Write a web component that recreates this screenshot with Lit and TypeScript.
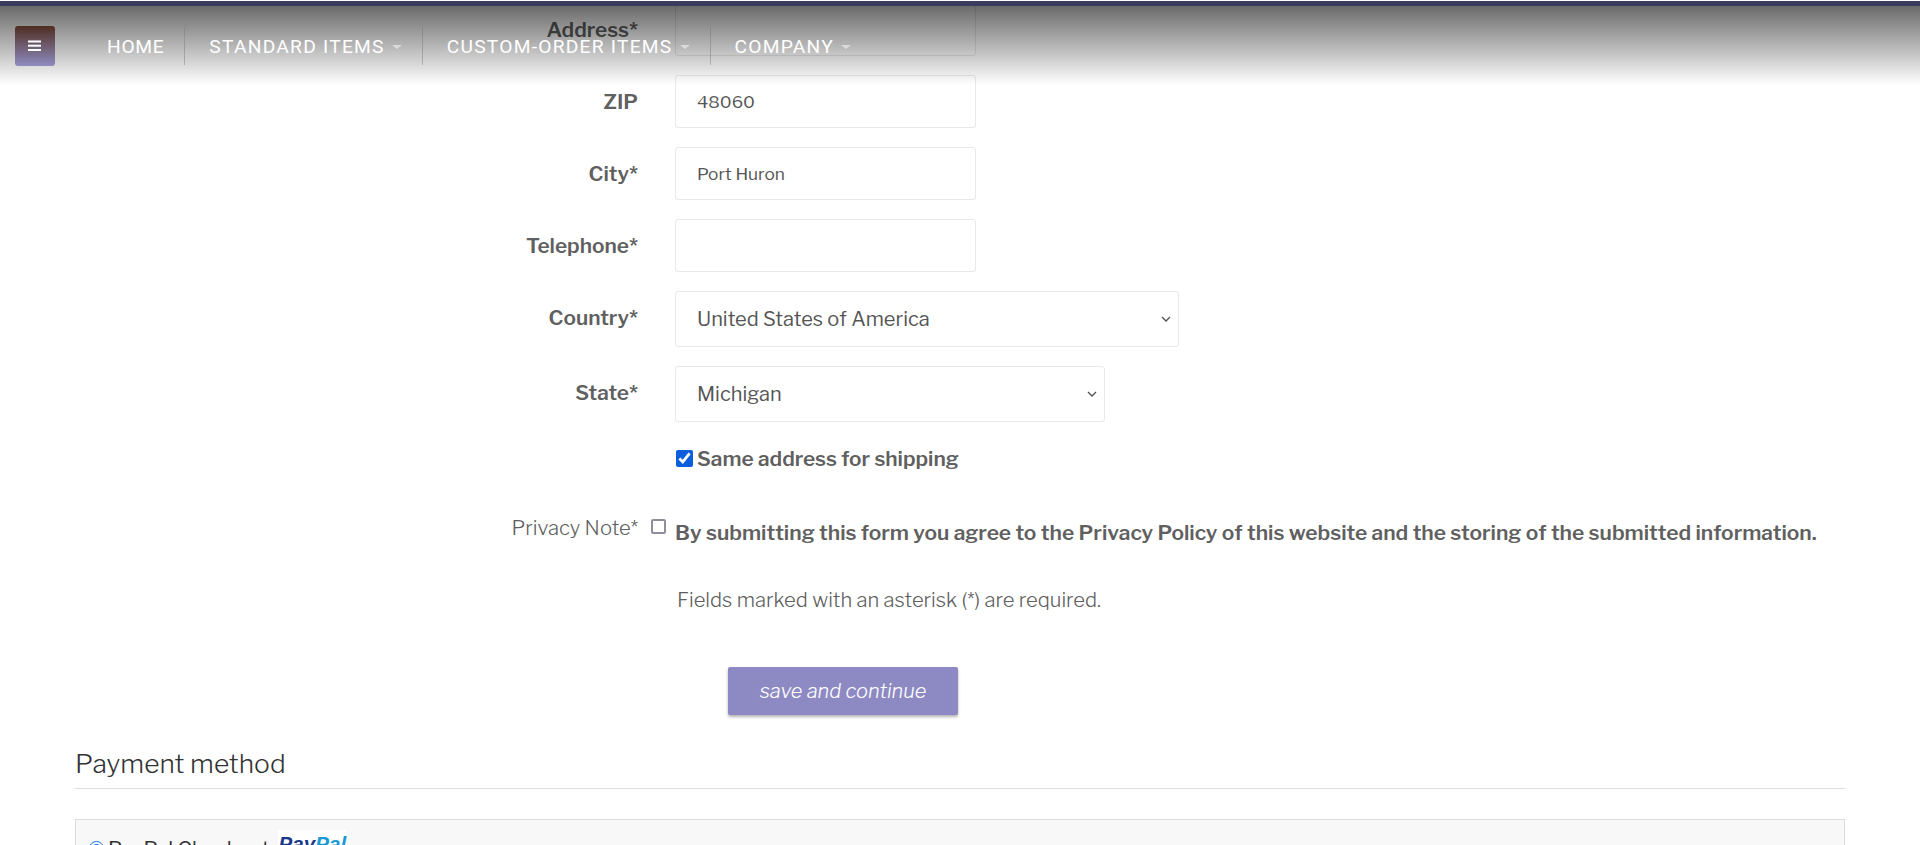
import { LitElement, html, css } from "lit";
import { customElement } from "lit/decorators.js";

@customElement("app-root")
export class AppRoot extends LitElement {
  static styles = css`
    :host { display: block; position: relative; height: 845px; overflow: hidden; background: #fff; font-family: "Libre Franklin", "Inter", "Liberation Sans", sans-serif; color: #606060; font-size: 20.8px; }
    * { box-sizing: border-box; }
    .nav { position: absolute; left: 0; right: 0; top: 0; height: 85px; z-index: 5; border-top: 1px solid #fff; background: linear-gradient(rgba(0,0,0,.62), rgba(0,0,0,0)); }
    .navtop { height: 5px; background: #3a3b5e; }
    .navrow { display: flex; align-items: center; height: 80px; padding: 0 0 0 15px; }
    .burger { width: 40px; height: 40px; border-radius: 3px; background: linear-gradient(#4f2d20, #8e8bc0); display: flex; align-items: center; justify-content: center; margin-right: 28px; }
    .burger svg { display: block; }
    .item { display: flex; align-items: center; height: 38px; padding: 2px 20px 0 24px; color: #fff; font: 400 19.2px/1 "Roboto", sans-serif; letter-spacing: 1.25px; border-right: 1px solid rgba(120,120,120,.45); white-space: nowrap; }
    .item.home { padding-right: 20px; letter-spacing: .7px; }
    .item:last-child { border-right: 0; }
    .caret { display: inline-block; margin-left: 7px; border-top: 4px solid rgba(255,255,255,.5); border-left: 5px solid transparent; border-right: 5px solid transparent; }
    .form { padding-top: 3px; }
    .row { display: flex; align-items: flex-start; margin-bottom: 19px; }
    .label { width: 638px; text-align: right; font-weight: 600; padding-top: 12px; flex: none; line-height: 29px; }
    .field { margin-left: 37px; }
    input[type="text"], select { display: block; border: 1px solid #e8e8e8; border-radius: 3px; background-color: #fff; color: #555; font: inherit; outline: 0; }
    input[type="text"] { width: 301px; height: 53px; padding: 0 21px; font-size: 17.3px; }
    select {
      appearance: none; -webkit-appearance: none; height: 56px; padding: 0 0 0 21px; font-size: 20px;
      background-repeat: no-repeat; background-position: right 7px center; background-size: 10px 6px;
      background-image: url("data:image/svg+xml,%3Csvg xmlns='http://www.w3.org/2000/svg' viewBox='0 0 10 6'%3E%3Cpath d='M1 1l4 4 4-4' fill='none' stroke='%23555' stroke-width='1.4'/%3E%3C/svg%3E");
    }
    .country { width: 504px; }
    .state { width: 430px; }
    .same { display: flex; align-items: center; margin: 22px 0 0 675px; height: 28px; font-weight: 600; gap: 4px; }
    .same input { width: 17px; height: 17px; margin: 1px 0 0 1px; accent-color: #0b5fdc; }
    .priv { display: flex; align-items: flex-start; margin-top: 42px; }
    .priv .plabel { width: 638px; text-align: right; font-weight: 300; font-size: 20.2px; line-height: 27px; flex: none; }
    .box { width: 15px; height: 15px; border: 2px solid #8f8e9f; border-radius: 2px; margin: 5px 0 0 13px; flex: none; }
    .ptext { margin-left: 9px; font-weight: 600; font-size: 20.95px; line-height: 27px; padding-top: 5px; white-space: nowrap; }
    .req { margin: 40px 0 0 677px; font-weight: 300; font-size: 20.2px; line-height: 27px; }
    .btn { display: flex; align-items: center; justify-content: center; width: 230px; height: 48px; margin: 54px 0 0 728px; background: #8d8ac3; color: #fff; font-style: italic; font-weight: 300; font-size: 20px; border-radius: 2px; box-shadow: 0 2px 3px rgba(0,0,0,.3); border: 0; font-family: inherit; }
    .pay { margin: 0 75px; }
    h2 { margin: 28px 0 0; font-size: 26.4px; font-weight: 300; color: #333; line-height: 40px; padding-bottom: 5px; border-bottom: 1px solid #ddd; height: 46px; }
    .panel { margin-top: 30px; height: 120px; background: #f8f8f8; border: 1px solid #ddd; padding: 14px 13px; display: flex; align-items: flex-start; }
    .panel input { margin: 7px 4px 0 0; width: 15px; height: 15px; accent-color: #0b6bf0; }
    .panel span.t { font-size: 20.4px; color: #333; font-weight: 400; line-height: 26px; padding-top: 2px; }
    .logo { background: #fff; margin: -4px 0 0 8px; padding: 0 1px; width: 68px; height: 40px; font: italic 700 20.6px/27px "Liberation Sans", sans-serif; color: #1a3a8c; }
    .logo b { color: #1a9ad6; }
  `;
  render() {
    const caret = html`<span class="caret"></span>`;
    return html`
      <div class="nav">
        <div class="navtop"></div>
        <div class="navrow">
          <div class="burger"><svg width="14" height="12" viewBox="0 0 14 12" fill="#fff"><rect y="0.5" width="13" height="2"/><rect y="4.7" width="13" height="2"/><rect y="9" width="13" height="2"/></svg></div>
          <div class="item home">HOME</div>
          <div class="item">STANDARD ITEMS${caret}</div>
          <div class="item">CUSTOM-ORDER ITEMS${caret}</div>
          <div class="item">COMPANY${caret}</div>
        </div>
      </div>
      <div class="form">
        <div class="row"><div class="label">Address*</div><div class="field"><input type="text" /></div></div>
        <div class="row"><div class="label">ZIP</div><div class="field"><input type="text" value="48060" /></div></div>
        <div class="row"><div class="label">City*</div><div class="field"><input type="text" value="Port Huron" /></div></div>
        <div class="row"><div class="label">Telephone*</div><div class="field"><input type="text" /></div></div>
        <div class="row"><div class="label">Country*</div><div class="field"><select class="country"><option>United States of America</option></select></div></div>
        <div class="row"><div class="label">State*</div><div class="field"><select class="state"><option>Michigan</option></select></div></div>
        <label class="same"><input type="checkbox" checked />Same address for shipping</label>
        <div class="priv"><div class="plabel">Privacy Note*</div><div class="box"></div><div class="ptext">By submitting this form you agree to the Privacy Policy of this website and the storing of the submitted information.</div></div>
        <div class="req">Fields marked with an asterisk (*) are required.</div>
        <button class="btn">save and continue</button>
      </div>
      <div class="pay">
        <h2>Payment method</h2>
        <div class="panel"><input type="radio" checked /><span class="t">PayPal Checkout</span><div class="logo">Pay<b>Pal</b></div></div>
      </div>
    `;
  }
}
